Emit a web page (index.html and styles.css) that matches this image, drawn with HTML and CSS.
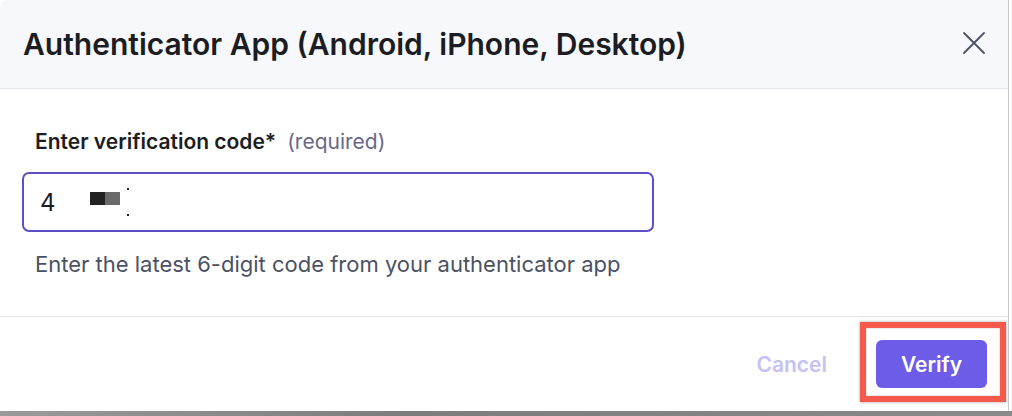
FILE: index.html
```html
<!DOCTYPE html>
<html>
<head>
<meta charset="utf-8">
<link rel="stylesheet" href="styles.css">
</head>
<body>
<div class="screen">
  <div class="dialog">
    <div class="header">
      <h1 class="title">Authenticator App (Android, iPhone, Desktop)</h1>
      <button class="close" aria-label="Close">
        <svg width="24" height="24" viewBox="0 0 24 24"><path d="M2 2 L22 22 M22 2 L2 22" stroke="#4b5260" stroke-width="1.8" fill="none" stroke-linecap="round"/></svg>
      </button>
    </div>
    <div class="body">
      <div class="label"><span class="label-main">Enter verification code*</span><span class="label-req">(required)</span></div>
      <div class="input">
        <span class="digit">4</span>
        <span class="redact"><span class="r1"></span><span class="r2"></span><span class="dots"><i></i><i></i></span></span>
      </div>
      <div class="help">Enter the latest 6-digit code from your authenticator app</div>
    </div>
    <div class="footer">
      <button class="cancel">Cancel</button>
      <div class="verify-wrap">
        <button class="verify">Verify</button>
        <span class="highlight"></span>
      </div>
    </div>
  </div>
  <div class="edge"></div>
</div>
<div class="bottom"></div>
</body>
</html>
```
FILE: styles.css
```css
html, body {
  margin: 0;
  padding: 0;
  background: #ffffff;
  font-family: Inter, "Noto Sans", sans-serif;
  overflow: hidden;
}
.screen {
  display: flex;
  height: 411px;
}
.dialog {
  width: 1008px;
  height: 411px;
  background: #fff;
  border-top-left-radius: 8px;
  display: flex;
  flex-direction: column;
  overflow: hidden;
}
.edge {
  width: 1px;
  background: #c9c9cc;
}
.bottom {
  height: 5px;
  background: linear-gradient(to right, #9a9a9a, #7d7d7d 40%, #8a8a8a);
}
.header {
  height: 88px;
  background: #f7f8fc;
  border-bottom: 1px solid #e1e4ee;
  display: flex;
  align-items: center;
  justify-content: space-between;
  padding: 0 22px 0 23px;
  flex-shrink: 0;
}
.title {
  margin: 0;
  font-size: 30px;
  font-weight: 600;
  color: #1b1d22;
  letter-spacing: 0;
  padding-bottom: 1px;
}
.close {
  border: 0;
  background: none;
  padding: 0;
  width: 24px;
  height: 24px;
  display: flex;
  margin-top: -2px;
}
.body {
  padding: 39px 22px 0 22px;
  height: 188px;
  border-bottom: 1px solid #e1e4ee;
  flex-shrink: 0;
}
.label {
  padding-left: 13px;
  display: flex;
  align-items: baseline;
  gap: 11px;
  line-height: 28px;
}
.label-main {
  font-size: 21px;
  font-weight: 600;
  color: #1b1d22;
}
.label-req {
  font-size: 21px;
  color: #6b6787;
}
.input {
  margin-top: 16px;
  width: 632px;
  height: 60px;
  box-sizing: border-box;
  border: 2px solid #5b4fc8;
  border-radius: 7px;
  display: flex;
  align-items: center;
  padding-left: 16px;
}
.digit {
  font-size: 24px;
  color: #1b1d22;
}
.redact {
  display: flex;
  align-items: center;
  margin-left: 34px;
  height: 40px;
  position: relative;
}
.r1 {
  width: 15px;
  height: 13px;
  background: #222;
  margin-top: -7px;
}
.r2 {
  width: 15px;
  height: 13px;
  background: #6a6a6a;
  margin-top: -7px;
}
.dots {
  display: flex;
  flex-direction: column;
  justify-content: space-between;
  height: 28px;
  margin-left: 7px;
}
.dots i {
  width: 2px;
  height: 2px;
  background: #222;
  display: block;
}
.help {
  margin-top: 18px;
  padding-left: 13px;
  font-size: 22px;
  line-height: 28px;
  color: #4a5263;
}
.footer {
  flex: 1;
  display: flex;
  justify-content: flex-end;
  align-items: flex-start;
  padding: 23px 21px 0 0;
  gap: 49px;
}
.cancel {
  border: 0;
  background: none;
  font-family: inherit;
  font-size: 21px;
  font-weight: 600;
  color: #c6c1f5;
  height: 48px;
  padding: 0;
}
.verify-wrap {
  position: relative;
}
.verify {
  border: 0;
  background: #6c5ce7;
  color: #fff;
  font-family: inherit;
  font-size: 21px;
  font-weight: 600;
  width: 111px;
  height: 48px;
  border-radius: 6px;
  padding: 0;
}
.highlight {
  position: absolute;
  left: -16px;
  top: -18px;
  width: 146px;
  height: 80px;
  box-sizing: border-box;
  border: 6px solid #f4594c;
  box-shadow: 0 0 3px rgba(0,0,0,0.35), inset 0 0 2px rgba(0,0,0,0.3);
  pointer-events: none;
}
```
